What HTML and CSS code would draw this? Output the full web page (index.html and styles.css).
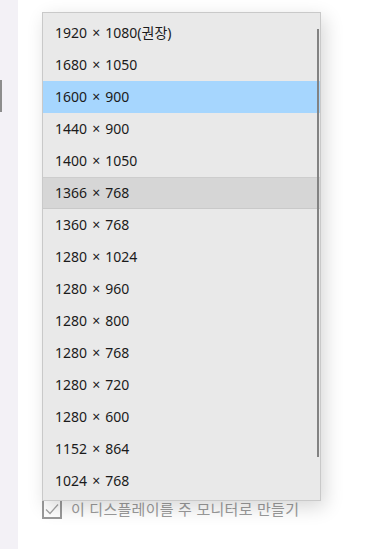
FILE: index.html
```html
<!DOCTYPE html>
<html lang="ko">
<head>
<meta charset="utf-8">
<link rel="stylesheet" href="styles.css">
</head>
<body>
<div class="page">
  <aside class="sidebar"><div class="indicator"></div></aside>
  <main class="main">
    <div class="check-row">
      <span class="checkbox">
        <svg width="16" height="16" viewBox="0 0 16 16"><path d="M2 8.5 L6 12.5 L14 3.5" fill="none" stroke="#a3a3a3" stroke-width="1.3"/></svg>
      </span>
      <span class="check-label">이 디스플레이를 주 모니터로 만들기</span>
    </div>
    <div class="popup">
      <ul class="list">
        <li class="item">1920 × 1080(권장)</li>
        <li class="item">1680 × 1050</li>
        <li class="item selected">1600 × 900</li>
        <li class="item">1440 × 900</li>
        <li class="item">1400 × 1050</li>
        <li class="item hover">1366 × 768</li>
        <li class="item">1360 × 768</li>
        <li class="item">1280 × 1024</li>
        <li class="item">1280 × 960</li>
        <li class="item">1280 × 800</li>
        <li class="item">1280 × 768</li>
        <li class="item">1280 × 720</li>
        <li class="item">1280 × 600</li>
        <li class="item">1152 × 864</li>
        <li class="item">1024 × 768</li>
      </ul>
      <div class="scrollbar"></div>
    </div>
  </main>
</div>
</body>
</html>
```

FILE: styles.css
```css
* { box-sizing: border-box; }
html, body { margin: 0; padding: 0; background: #ffffff; }
body {
  font-family: "Noto Sans", "Noto Sans CJK KR", sans-serif;
  color: #1b1b1b;
}
.page {
  display: flex;
  width: 384px;
  height: 549px;
  overflow: hidden;
}
.sidebar {
  width: 18px;
  flex: none;
  background: #f3f1f6;
  padding-top: 80px;
}
.indicator {
  width: 2px;
  height: 32px;
  background: #8d8d8d;
}
.main {
  position: relative;
  flex: 1;
  padding-left: 24px;
  padding-top: 499px;
}
.check-row {
  display: flex;
  align-items: center;
  gap: 9px;
  height: 20px;
}
.checkbox {
  width: 20px;
  height: 20px;
  border: 2px solid #9a9a9a;
  display: flex;
  align-items: center;
  justify-content: center;
}
.check-label {
  font-size: 15px;
  color: #9b9b9b;
  letter-spacing: 0.3px;
  margin-top: -1px;
}
.popup {
  position: absolute;
  left: 24px;
  top: 12px;
  width: 279px;
  height: 489px;
  background: #e9e9e9;
  border: 1px solid #c9c9c9;
  box-shadow: 4px 6px 18px rgba(0,0,0,0.16);
  padding-top: 4px;
}
.list {
  list-style: none;
  margin: 0;
  padding: 0;
}
.item {
  height: 32px;
  line-height: 32px;
  padding-left: 12px;
  font-size: 14px;
  word-spacing: 1.5px;
  white-space: nowrap;
}
.item.selected { background: #a6d6fe; }
.item.hover {
  background: #d6d6d6;
  border-top: 1px solid #cdcdcd;
  border-bottom: 1px solid #c9c9c9;
  line-height: 30px;
}
.scrollbar {
  position: absolute;
  right: 1px;
  top: 16px;
  width: 2px;
  height: 428px;
  background: #828282;
}
```
